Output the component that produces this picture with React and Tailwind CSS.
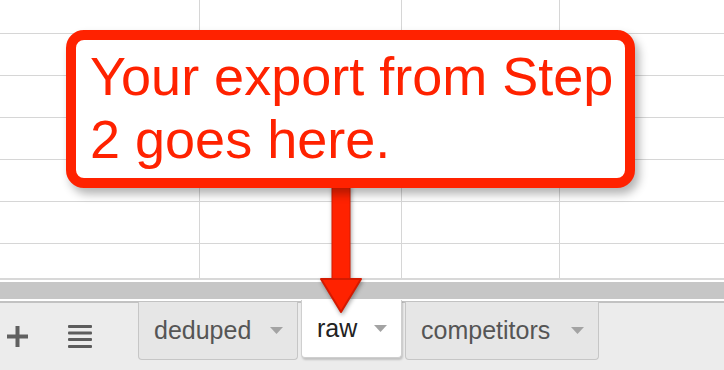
const rows = [34, 42, 42, 42, 42, 42, 36];

function Caret() {
  return (
    <svg width="13" height="7" viewBox="0 0 13 7" className="shrink-0">
      <path d="M0 0h13L6.5 7z" fill="#a3a3a3" />
    </svg>
  );
}

function SheetTab({ label, active, className }) {
  return (
    <div
      className={
        'flex h-[58px] items-center justify-between rounded-b-[4px] border border-t-0 pl-[15px] pr-[14px] text-[25px] ' +
        (active
          ? 'bg-white border-[#cfcfcf] text-[#222] shadow-[1px_2px_2px_rgba(0,0,0,0.18)] '
          : 'bg-[#e6e6e6] border-[#c6c6c6] text-[#555] ') +
        className
      }
    >
      <span>{label}</span>
      <Caret />
    </div>
  );
}

export default function App() {
  return (
    <div className="relative flex h-[370px] w-[724px] flex-col overflow-hidden bg-white font-['Liberation_Sans',Arial,sans-serif]">
      {/* spreadsheet cells */}
      <div className="flex h-[278px] flex-col overflow-hidden">
        {rows.map((h, i) => (
          <div
            key={i}
            style={{ height: h }}
            className={
              'grid shrink-0 grid-cols-[200px_202px_158px_1fr] ' +
              (i < rows.length - 1 ? 'border-b border-[#d6d6d6]' : '')
            }
          >
            <div className="border-r border-[#d6d6d6]" />
            <div className="border-r border-[#d6d6d6]" />
            <div className="border-r border-[#d6d6d6]" />
            <div />
          </div>
        ))}
      </div>

      {/* scrollbar strip */}
      <div className="h-[2px] bg-[#d8d8d8]" />
      <div className="h-[2px] bg-white" />
      <div className="h-[17px] bg-[#c6c6c6]" />
      <div className="h-[2px] bg-white" />
      <div className="h-[2px] bg-[#c2c2c2]" />

      {/* sheet tabs */}
      <div className="flex flex-1 items-start bg-[#ececec]">
        <div className="ml-[7px] flex h-[67px] items-center">
          <svg width="21" height="21" viewBox="0 0 21 21">
            <path d="M8.5 0h4v8.5H21v4h-8.5V21h-4v-8.5H0v-4h8.5z" fill="#606060" />
          </svg>
        </div>
        <div className="ml-[40px] flex h-[67px] items-center">
          <svg width="24" height="23" viewBox="0 0 24 23">
            <g fill="#5c5c5c">
              <rect x="0" y="0" width="24" height="3" rx="1" />
              <rect x="0" y="6.5" width="24" height="3" rx="1" />
              <rect x="0" y="13" width="24" height="3" rx="1" />
              <rect x="0" y="20" width="24" height="3" rx="1" />
            </g>
          </svg>
        </div>
        <div className="ml-[46px] flex items-start gap-[3px]">
          <SheetTab label="deduped" className="-mt-[1px] w-[160px]" />
          <SheetTab label="raw" active className="-mt-[3px] w-[101px] pl-[14px]" />
          <SheetTab label="competitors" className="-mt-[1px] w-[194px]" />
        </div>
      </div>

      {/* arrow pointing at the raw tab */}
      <svg
        width="50"
        height="134"
        viewBox="0 0 50 134"
        className="absolute left-[316px] top-[184px] drop-shadow-[1px_2px_2px_rgba(0,0,0,0.35)]"
      >
        <rect x="16" y="0" width="18" height="98" fill="#ff2200" stroke="#d41a00" strokeWidth="1" />
        <path
          d="M5 95 L45 95 L25 128 Z"
          fill="#ff2200"
          stroke="#d41a00"
          strokeWidth="2"
          strokeLinejoin="round"
        />
      </svg>

      {/* callout */}
      <div className="absolute left-[66px] top-[30px] h-[158px] w-[569px] rounded-[18px] border-[10px] border-[#ff2200] bg-white pl-[14px] pt-[5px] text-[54px] leading-[63px] text-[#ff2200] shadow-[4px_6px_10px_rgba(0,0,0,0.3)]">
        Your export from Step
        <br />2 goes here.
      </div>
    </div>
  );
}
